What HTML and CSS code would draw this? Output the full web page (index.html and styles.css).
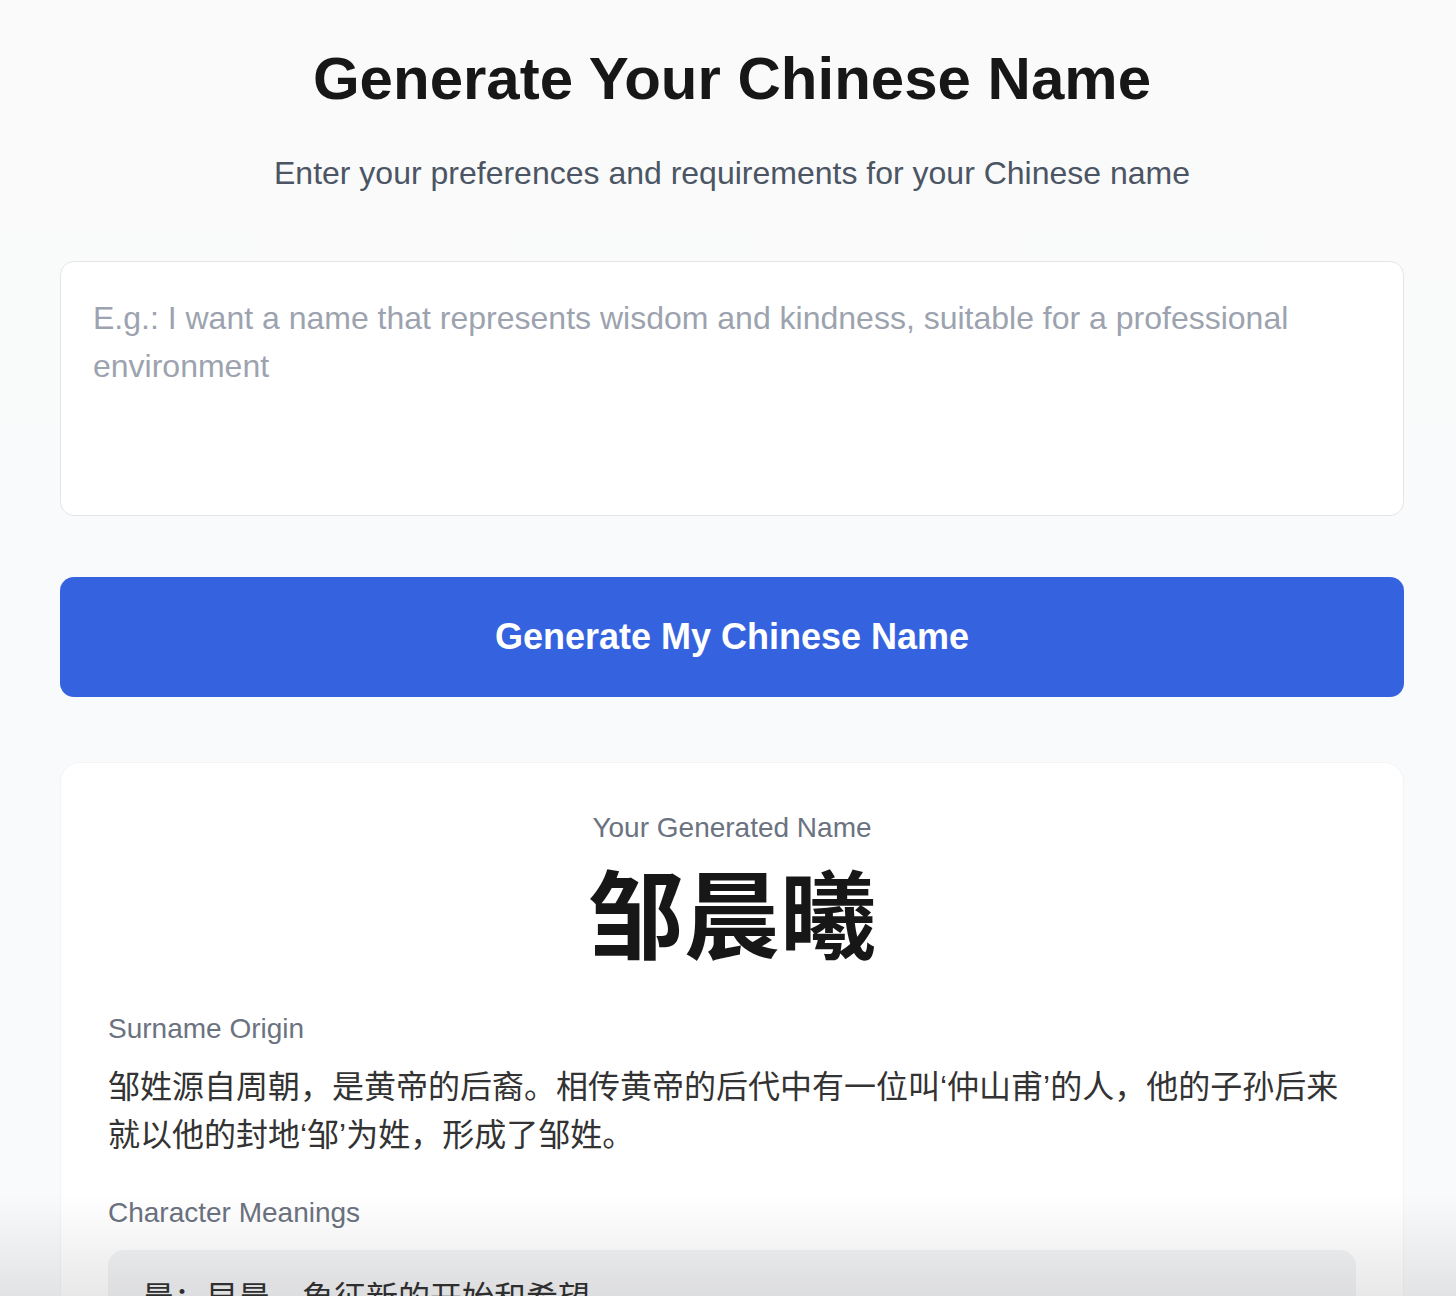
FILE: index.html
```html
<!DOCTYPE html>
<html lang="en">
<head>
<meta charset="utf-8">
<title>Generate Your Chinese Name</title>
<link rel="stylesheet" href="styles.css">
</head>
<body>
<main class="page">
  <h1 class="title">Generate Your Chinese Name</h1>
  <p class="subtitle">Enter your preferences and requirements for your Chinese name</p>
  <textarea class="prefs" placeholder="E.g.: I want a name that represents wisdom and kindness, suitable for a professional environment"></textarea>
  <button class="generate" type="button">Generate My Chinese Name</button>
  <section class="result">
    <div class="result-label">Your Generated Name</div>
    <div class="result-name">邹晨曦</div>
    <div class="section-label">Surname Origin</div>
    <p class="origin">邹姓源自周朝，是黄帝的后裔。相传黄帝的后代中有一位叫‘仲山甫’的人，他的子孙后来就以他的封地‘邹’为姓，形成了邹姓。</p>
    <div class="section-label">Character Meanings</div>
    <div class="meaning">晨：早晨，象征新的开始和希望</div>
  </section>
</main>
<div class="fade"></div>
</body>
</html>
```
FILE: styles.css
```css
* { box-sizing: border-box; }
html, body { margin: 0; }
body {
  background: linear-gradient(#fafafa 0, #f9fafb 600px, #f8fafc 1296px);
  font-family: "Liberation Sans", "Noto Sans CJK SC", sans-serif;
  color: #1a1a1a;
  min-height: 1296px;
}
.page {
  padding: 43px 52px 0 60px;
  display: flex;
  flex-direction: column;
}
.title {
  margin: 0;
  text-align: center;
  font-size: 60px;
  line-height: 72px;
  font-weight: 700;
  color: #171717;
}
.subtitle {
  margin: 34px 0 0;
  text-align: center;
  font-size: 32px;
  line-height: 48px;
  color: #4b5563;
}
.prefs {
  margin-top: 64px;
  height: 255px;
  width: 100%;
  border: 1px solid #e3e5e8;
  border-radius: 14px;
  background: #fff;
  padding: 32px;
  font-family: "Liberation Sans", "Noto Sans CJK SC", sans-serif;
  font-size: 32px;
  line-height: 48px;
  color: #1a1a1a;
  resize: none;
  outline: none;
}
.prefs::placeholder { color: #9ca3af; }
.generate {
  margin-top: 61px;
  height: 120px;
  width: 100%;
  border: none;
  border-radius: 14px;
  background: #3563e0;
  color: #fff;
  font-family: "Liberation Sans", sans-serif;
  font-size: 36px;
  font-weight: 700;
}
.result {
  margin-top: 65px;
  background: #fff;
  border: 1px solid #f3f4f6;
  border-radius: 20px;
  padding: 47px 47px 48px;
  display: flex;
  flex-direction: column;
}
.result-label {
  text-align: center;
  font-size: 28px;
  line-height: 36px;
  color: #6b7280;
}
.result-name {
  margin-top: 4px;
  text-align: center;
  font-family: "Noto Sans CJK SC", sans-serif;
  font-size: 96px;
  line-height: 120px;
  font-weight: 700;
  color: #171717;
}
.section-label {
  margin-top: 41px;
  font-size: 28px;
  line-height: 36px;
  color: #6b7280;
}
.origin {
  margin: 16px 0 0;
  font-size: 32px;
  line-height: 48px;
  color: #333;
}
.origin + .section-label { margin-top: 36px; }
.meaning {
  margin-top: 19px;
  background: #f3f4f6;
  border-radius: 16px;
  padding: 24px 34px;
  font-size: 32px;
  line-height: 48px;
  color: #333;
}
.fade {
  position: fixed;
  left: 0;
  right: 0;
  bottom: 0;
  height: 100px;
  background: linear-gradient(rgba(0,0,0,0), rgba(0,0,0,0.09));
  pointer-events: none;
}
```
